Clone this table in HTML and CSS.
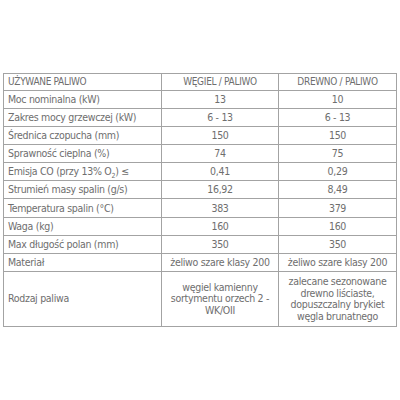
FILE: index.html
```html
<!DOCTYPE html>
<html lang="pl">
<head>
<meta charset="utf-8">
<link rel="stylesheet" href="styles.css">
</head>
<body>
<div class="wrap">
<table class="spec">
  <colgroup>
    <col class="c1"><col class="c2"><col class="c3">
  </colgroup>
  <tr class="head">
    <td class="lbl">UŻYWANE PALIWO</td>
    <td>WĘGIEL / PALIWO</td>
    <td>DREWNO / PALIWO</td>
  </tr>
  <tr><td class="lbl">Moc nominalna (kW)</td><td>13</td><td>10</td></tr>
  <tr><td class="lbl">Zakres mocy grzewczej (kW)</td><td>6 - 13</td><td>6 - 13</td></tr>
  <tr><td class="lbl">Średnica czopucha (mm)</td><td>150</td><td>150</td></tr>
  <tr><td class="lbl">Sprawność cieplna (%)</td><td>74</td><td>75</td></tr>
  <tr><td class="lbl">Emisja CO (przy 13% O<sub>2</sub>) ≤</td><td>0,41</td><td>0,29</td></tr>
  <tr><td class="lbl">Strumień masy spalin (g/s)</td><td>16,92</td><td>8,49</td></tr>
  <tr class="tall"><td class="lbl">Temperatura spalin (°C)</td><td>383</td><td>379</td></tr>
  <tr><td class="lbl">Waga (kg)</td><td>160</td><td>160</td></tr>
  <tr><td class="lbl">Max długość polan (mm)</td><td>350</td><td>350</td></tr>
  <tr><td class="lbl">Materiał</td><td>żeliwo szare klasy 200</td><td>żeliwo szare klasy 200</td></tr>
  <tr class="multi">
    <td class="lbl">Rodzaj paliwa</td>
    <td>węgiel kamienny<br>sortymentu orzech 2 -<br>WK/OII</td>
    <td>zalecane sezonowane<br>drewno liściaste,<br>dopuszczalny brykiet<br>węgla brunatnego</td>
  </tr>
</table>
</div>
</body>
</html>
```

FILE: styles.css
```css
html, body {
  margin: 0;
  padding: 0;
  background: #ffffff;
}
.wrap {
  padding: 73px 0 0 3px;
}
.spec {
  border-collapse: collapse;
  width: 393px;
  table-layout: fixed;
  font-family: "DejaVu Sans Condensed", "DejaVu Sans", Verdana, sans-serif;
  font-stretch: condensed;
  font-size: 10.5px;
  letter-spacing: -0.3px;
  color: #6e6e6e;
}
.c1 { width: 158px; }
.c2 { width: 117px; }
.c3 { width: 118px; }
.spec td {
  border: 1px solid #a3a3a3;
  padding: 1px 2px;
  line-height: 15px;
  text-align: center;
  vertical-align: middle;
  white-space: nowrap;
}
.spec td.lbl {
  text-align: left;
  padding-left: 4px;
}
.head td {
  font-size: 10px;
  line-height: 14px;
}
.tall td {
  line-height: 16px;
}
.spec sub {
  font-size: 7px;
  line-height: 0;
}
.multi td {
  line-height: 11.5px;
  padding-top: 4px;
  padding-bottom: 4px;
}
```
